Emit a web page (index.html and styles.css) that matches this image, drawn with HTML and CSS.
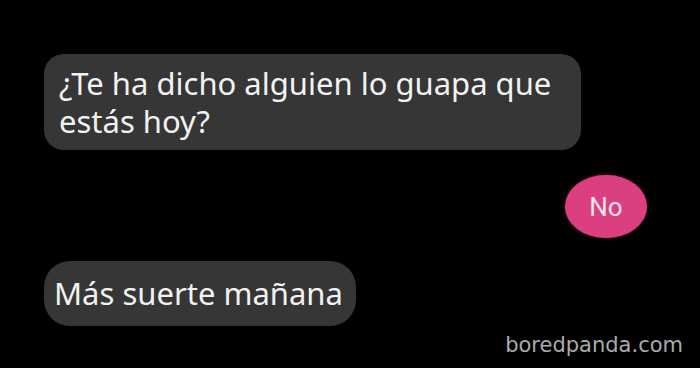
FILE: index.html
```html
<!DOCTYPE html>
<html>
<head>
<meta charset="utf-8">
<link rel="stylesheet" href="styles.css">
</head>
<body>
<div class="chat">
  <div class="bubble in first">¿Te ha dicho alguien lo guapa que estás hoy?</div>
  <div class="bubble out">No</div>
  <div class="bubble in second">Más suerte mañana</div>
</div>
<div class="credit">boredpanda.com</div>
</body>
</html>
```
FILE: styles.css
```css
html, body {
  margin: 0;
  padding: 0;
  background: #000;
  width: 700px;
  height: 368px;
  overflow: hidden;
}
.chat {
  display: flex;
  flex-direction: column;
  align-items: flex-start;
  padding: 54px 53px 0 44px;
}
.bubble {
  box-sizing: border-box;
  font-family: "Noto Sans", "Open Sans", sans-serif;
  color: #f2f2f2;
}
.in {
  background: #363636;
  font-size: 31px;
  line-height: 38px;
}
.first {
  width: 537px;
  height: 96px;
  padding: 10px 15px;
  border-radius: 20px;
}
.out {
  align-self: flex-end;
  margin-top: 25px;
  width: 82px;
  height: 63px;
  border-radius: 41px / 32px;
  background: #db3f80;
  color: #fbe3ee;
  font-family: Roboto, "Liberation Sans", sans-serif;
  font-size: 26px;
  display: flex;
  align-items: center;
  justify-content: center;
  box-shadow: 0 0 3px rgba(219, 63, 128, 0.5);
}
.second {
  margin-top: 23px;
  height: 65px;
  padding: 13px 13px 0 10px;
  border-radius: 26px;
}
.credit {
  position: absolute;
  right: 17px;
  top: 333px;
  font-family: "DejaVu Sans", sans-serif;
  font-size: 21px;
  color: #ababab;
}
```
